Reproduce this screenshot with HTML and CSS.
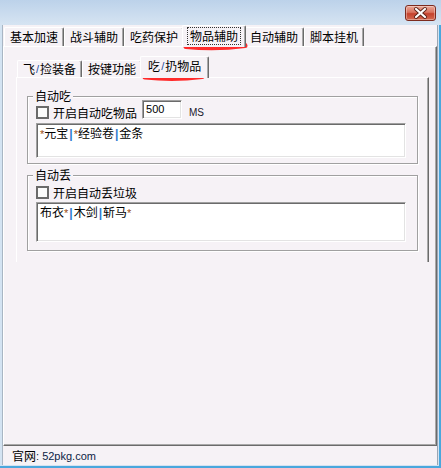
FILE: index.html
```html
<!DOCTYPE html>
<html lang="zh">
<head>
<meta charset="utf-8">
<title>物品辅助</title>
<link rel="stylesheet" href="styles.css">
</head>
<body>
<div class="window">
  <div class="titlebar">
    <div class="close">
      <svg width="29" height="14" viewBox="0 0 29 14">
        <path d="M10 3 L19 11 M19 3 L10 11" stroke="#5b2318" stroke-width="4" stroke-linecap="round"/>
        <path d="M10 3 L19 11 M19 3 L10 11" stroke="#ffffff" stroke-width="2.2" stroke-linecap="round"/>
      </svg>
    </div>
  </div>
  <div class="frame">
    <div class="client">
      <div class="tabs outer-tabs">
        <div class="tab">基本加速</div>
        <div class="tab">战斗辅助</div>
        <div class="tab">吃药保护</div>
        <div class="tab active"><span class="focus">物品辅助</span></div>
        <div class="tab">自动辅助</div>
        <div class="tab">脚本挂机</div>
      </div>
      <div class="panel outer-panel">
        <div class="tabs inner-tabs">
          <div class="itab">飞<span class="sl">/</span>捡装备</div>
          <div class="itab">按键功能</div>
          <div class="itab active">吃<span class="sl">/</span>扔物品</div>
        </div>
        <div class="panel inner-panel">
          <div class="group group-eat">
            <div class="group-title">自动吃</div>
            <div class="row">
              <span class="check"></span>
              <span class="label">开启自动吃物品</span>
              <div class="num">500</div>
              <span class="unit">MS</span>
            </div>
            <div class="list list-eat"><span class="ast">*</span>元宝<span class="bar">|</span><span class="ast">*</span>经验卷<span class="bar">|</span>金条</div>
          </div>
          <div class="group group-drop">
            <div class="group-title">自动丢</div>
            <div class="row row-drop">
              <span class="check"></span>
              <span class="label">开启自动丢垃圾</span>
            </div>
            <div class="list list-drop">布衣<span class="ast">*</span><span class="bar">|</span>木剑<span class="bar">|</span>斩马<span class="ast">*</span></div>
          </div>
        </div>
      </div>
      <div class="status"><span>官网</span><span class="url">: 52pkg.com</span></div>
    </div>
  </div>
  <svg class="marks" width="441" height="468" viewBox="0 0 441 468">
    <path d="M186 46.5 Q216 49.5 245 45.5" stroke="#ff2b2b" stroke-width="5" fill="none" stroke-linecap="round"/>
    <path d="M145 77 Q174 80 202 76.5" stroke="#ff2b2b" stroke-width="5" fill="none" stroke-linecap="round"/>
  </svg>
</div>
</body>
</html>
```
FILE: styles.css
```css
* { box-sizing: border-box; }
html, body { margin: 0; padding: 0; }
body {
  width: 441px;
  height: 468px;
  overflow: hidden;
  font-family: "Noto Sans CJK SC", "Noto Sans", sans-serif;
  font-size: 12px;
  color: #000;
  background: #c9dcef;
}
.window {
  position: relative;
  width: 441px;
  height: 468px;
  display: flex;
  flex-direction: column;
}
.titlebar {
  flex: none;
  height: 25px;
  background: linear-gradient(#bcd2ea, #d6e4f2);
  display: flex;
  justify-content: flex-end;
  padding: 5px 5px 0 0;
}
.close {
  width: 31px;
  height: 16px;
  border: 1px solid #7d2b1f;
  border-radius: 3px;
  background: linear-gradient(#eaa797 0%, #d9735f 45%, #c5412c 55%, #d46a52 100%);
  box-shadow: inset 0 0 0 1px rgba(255,255,255,0.35);
  display: flex;
  align-items: center;
  justify-content: center;
}
.close svg { display: block; }
.frame {
  flex: 1;
  display: flex;
  padding: 0 1px 1px 2px;
  background: #d3e3f2;
  border-right: 2px solid #4aa7dd;
  border-bottom: 2px solid #4aa7dd;
}
.client {
  flex: 1;
  display: flex;
  flex-direction: column;
  background: #f6f2f6;
  border-left: 1px solid #a9b6c4;
  border-right: 1px solid #9aa6b4;
}
.tabs {
  display: flex;
  align-items: flex-end;
  flex: none;
}
.outer-tabs {
  height: 21px;
  padding-left: 1px;
}
.tab {
  width: 60px;
  height: 19px;
  display: flex;
  align-items: center;
  justify-content: center;
  border-top: 1px solid #ffffff;
  border-left: 1px solid #ffffff;
  border-right: 1px solid #6b6b6b;
  box-shadow: inset -1px 0 #a9a9a9;
  border-radius: 2px 2px 0 0;
  line-height: 14px;
  background: #f6f2f6;
}
.tab.active {
  width: 64px;
  height: 22px;
  margin: 0 -2px -1px;
  position: relative;
  z-index: 1;
  align-items: flex-start;
  padding-top: 2px;
}
.focus {
  outline: 1px dotted #333;
  padding: 1px 2px;
  line-height: 14px;
}
.panel {
  border-top: 1px solid #ffffff;
  border-left: 1px solid #ffffff;
  border-right: 1px solid #6b6b6b;
  border-bottom: 1px solid #6b6b6b;
  box-shadow: inset -1px -1px #a9a9a9;
}
.outer-panel {
  flex: 1;
  display: flex;
  flex-direction: column;
  padding: 9px 7px 0 12px;
}
.inner-tabs {
  height: 21px;
  padding-left: 1px;
}
.itab {
  height: 17px;
  padding: 0 5px;
  display: flex;
  align-items: center;
  border-top: 1px solid #ffffff;
  border-left: 1px solid #ffffff;
  border-right: 1px solid #6b6b6b;
  box-shadow: inset -1px 0 #a9a9a9;
  border-radius: 2px 2px 0 0;
  line-height: 14px;
  background: #f6f2f6;
}
.itab.active {
  height: 22px;
  margin: 0 -2px -1px;
  padding: 2px 7px 0;
  align-items: flex-start;
  position: relative;
  z-index: 1;
}
.sl {
  font-family: "Liberation Sans", sans-serif;
  font-size: 11px;
  color: #1d4fa0;
  margin: 0 1px;
}
.inner-panel {
  flex: none;
  height: 185px;
  padding: 0 10px;
  border-bottom: none;
  box-shadow: inset -1px 0 #a9a9a9;
}
.group {
  position: relative;
  border: 1px solid #a0a0a0;
  box-shadow: inset 1px 1px #ffffff, 1px 1px #ffffff;
  padding: 3px 11px 5px 8px;
}
.group-eat { margin-top: 18px; }
.group-drop { margin-top: 11px; padding-top: 10px; padding-bottom: 8px; }
.group-title {
  position: absolute;
  top: -8px;
  left: 5px;
  padding: 0 2px;
  line-height: 14px;
  background: #f6f2f6;
}
.row {
  display: flex;
  align-items: flex-end;
  height: 19px;
}
.row-drop { height: 13px; }
.check {
  flex: none;
  width: 13px;
  height: 13px;
  border: 2px solid #6a6a6a;
  background: #fbfbfb;
  margin-right: 4px;
}
.label {
  line-height: 13px;
}
.num {
  width: 40px;
  height: 19px;
  margin-left: 5px;
  background: #ffffff;
  border: 1px solid;
  border-color: #a0a0a0 #ffffff #ffffff #a0a0a0;
  box-shadow: inset 1px 1px #6b6b6b, inset -1px -1px #e3e3e3;
  font-family: "Liberation Sans", sans-serif;
  font-size: 11px;
  line-height: 15px;
  padding: 1px 0 0 3px;
}
.unit {
  margin-left: 7px;
  font-family: "Liberation Sans", sans-serif;
  font-size: 10px;
  line-height: 13px;
  color: #1a1a2e;
}
.list {
  margin-top: 4px;
  height: 35px;
  background: #ffffff;
  border: 1px solid;
  border-color: #a0a0a0 #ffffff #ffffff #a0a0a0;
  box-shadow: inset 1px 1px #6b6b6b, inset -1px -1px #e3e3e3;
  padding: 2px 3px;
  line-height: 14px;
}
.list-drop { margin-top: 3px; height: 40px; }
.ast {
  font-family: "Liberation Sans", sans-serif;
  font-size: 11px;
  color: #9a4a10;
}
.bar {
  font-family: "Liberation Sans", sans-serif;
  font-size: 12px;
  font-weight: bold;
  color: #2f7bd0;
  margin: 0 1px;
}
.status {
  flex: none;
  height: 19px;
  display: flex;
  align-items: center;
  padding-left: 9px;
  line-height: 14px;
}
.url {
  font-family: "Liberation Sans", sans-serif;
  font-size: 11px;
  color: #0d1d45;
}
.marks {
  position: absolute;
  left: 0;
  top: 0;
  pointer-events: none;
}
```
